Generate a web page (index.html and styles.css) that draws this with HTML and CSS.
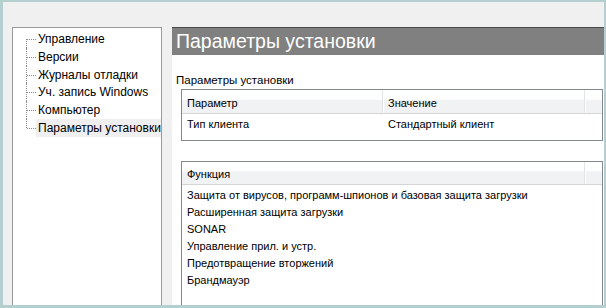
FILE: index.html
```html
<!DOCTYPE html>
<html lang="ru">
<head>
<meta charset="utf-8">
<title>Параметры установки</title>
<link rel="stylesheet" href="styles.css">
</head>
<body>
<div class="window">
  <div class="tree">
    <ul class="tree-list">
      <li><span class="node">Управление</span></li>
      <li><span class="node">Версии</span></li>
      <li><span class="node">Журналы отладки</span></li>
      <li><span class="node">Уч. запись Windows</span></li>
      <li><span class="node">Компьютер</span></li>
      <li><span class="node selected">Параметры установки</span></li>
    </ul>
  </div>
  <div class="panel">
    <div class="title">Параметры установки</div>
    <div class="content">
      <div class="label">Параметры установки</div>
      <div class="list list-params">
        <div class="list-head">
          <div class="col col-a">Параметр</div>
          <div class="col col-b">Значение</div>
          <div class="col col-c"></div>
        </div>
        <div class="list-body">
          <div class="row"><div class="col col-a">Тип клиента</div><div class="col col-b">Стандартный клиент</div></div>
        </div>
      </div>
      <div class="list list-func">
        <div class="list-head head-func">
          <div class="col col-ab">Функция</div>
          <div class="col col-c"></div>
        </div>
        <div class="list-body body-func">
          <div class="frow">Защита от вирусов, программ-шпионов и базовая защита загрузки</div>
          <div class="frow">Расширенная защита загрузки</div>
          <div class="frow">SONAR</div>
          <div class="frow">Управление прил. и устр.</div>
          <div class="frow">Предотвращение вторжений</div>
          <div class="frow">Брандмауэр</div>
        </div>
      </div>
    </div>
  </div>
</div>
</body>
</html>
```
FILE: styles.css
```css
html, body {
  margin: 0;
  padding: 0;
  background: #b3cfd0;
}
body {
  font-family: "Liberation Sans", Arial, sans-serif;
  color: #000;
}
.window {
  box-sizing: border-box;
  width: 606px;
  height: 308px;
  border-style: solid;
  border-color: #b3cfd0;
  border-width: 2px 2px 3px 3px;
  background: #f0f0f0;
  display: flex;
  align-items: stretch;
  gap: 10px;
  padding: 25px 0 0 9px;
  overflow: hidden;
}
.tree {
  box-sizing: border-box;
  width: 150px;
  flex: none;
  background: #fff;
  border: 1px solid #9a9a9a;
  border-bottom: none;
  padding-top: 2px;
}
.tree-list {
  list-style: none;
  margin: 0;
  padding: 0;
}
.tree-list li {
  position: relative;
  padding-left: 23px;
  height: 17.8px;
}
.tree-list li::before {
  content: "";
  position: absolute;
  left: 13px;
  top: 0;
  bottom: 0;
  border-left: 1px dotted #8a8a8a;
}
.tree-list li:first-child::before { top: 9px; }
.tree-list li:last-child::before { bottom: 9px; }
.tree-list li::after {
  content: "";
  position: absolute;
  left: 14px;
  width: 9px;
  top: 9px;
  border-top: 1px dotted #8a8a8a;
}
.node {
  display: block;
  padding-left: 2px;
  font-size: 12px;
  line-height: 18px;
  white-space: nowrap;
  overflow: hidden;
}
.node.selected {
  background: #efefef;
}
.panel {
  flex: 1;
  display: flex;
  flex-direction: column;
  background: #fff;
  min-width: 0;
}
.title {
  box-sizing: border-box;
  height: 28px;
  border-top: 1px solid #4a4a4a;
  background: #808080;
  color: #fff;
  font-size: 19.5px;
  line-height: 26px;
  padding-left: 4px;
  white-space: nowrap;
}
.content {
  flex: 1;
  display: flex;
  flex-direction: column;
  padding: 18px 1px 0 4px;
  min-height: 0;
}
.label {
  font-size: 11.5px;
  line-height: 14px;
}
.list {
  margin: 2px 0 0 5px;
  border: 1px solid #828790;
  font-size: 11px;
}
.list-func {
  margin-top: 20px;
  flex: 1;
  border-bottom: none;
}
.list-head {
  display: flex;
  height: 23px;
  border-bottom: 1px solid #d5d5d5;
  background: linear-gradient(to bottom, #ffffff 0, #ffffff 40%, #f1f2f4 45%, #f1f2f4 100%);
}
.head-func {
  height: 22px;
}
.list-head .col {
  box-sizing: border-box;
  padding: 6px 0 0 5px;
  line-height: 14px;
  border-right: 1px solid #e3e4e6;
  box-shadow: 1px 0 0 #ffffff;
}
.head-func .col {
  padding-top: 5px;
}
.col-a { width: 201px; }
.col-b { width: 202px; }
.col-ab { width: 403px; }
.list-head .col-c {
  flex: 1;
  border-right: none;
  box-shadow: none;
}
.row {
  display: flex;
  height: 26px;
}
.row .col {
  box-sizing: border-box;
  padding: 3px 0 0 5px;
  line-height: 14px;
}
.body-func {
  padding: 2px 0 0 5px;
}
.frow {
  line-height: 17px;
  white-space: nowrap;
}
```
